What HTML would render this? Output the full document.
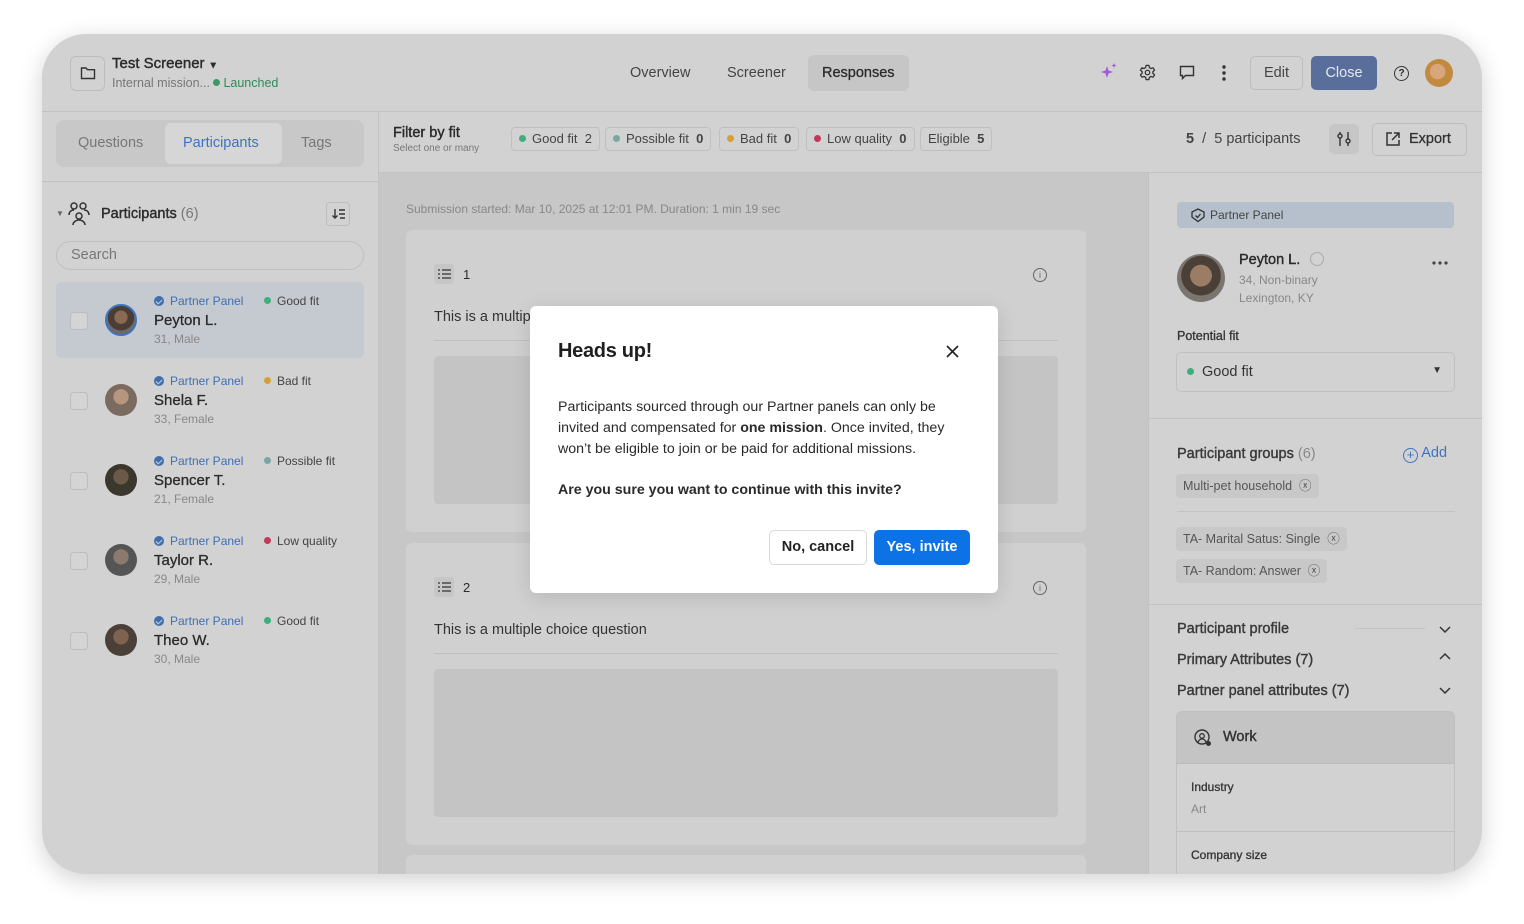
<!DOCTYPE html>
<html><head><meta charset="utf-8"><style>
*{box-sizing:border-box;margin:0;padding:0}
body{width:1524px;height:924px;background:#fff;font-family:"Liberation Sans",sans-serif;position:relative;overflow:hidden;color:#2a2a2a}
.win{position:absolute;left:42px;top:34px;width:1440px;height:840px;border-radius:44px;background:#d2d2d2;overflow:hidden;box-shadow:0 6px 24px rgba(0,0,0,.18)}
.a{position:absolute}
.t{position:absolute;white-space:nowrap}
.chip{position:absolute;top:93px;height:24px;border:1px solid #bfbfbf;border-radius:4px;font-size:13px;color:#444;padding:0 7px;line-height:22px;white-space:nowrap}
.dot{display:inline-block;width:7px;height:7px;border-radius:50%;margin-right:6px;vertical-align:1px}
.row{position:absolute;left:14px;width:308px;height:76px}
.cb{position:absolute;left:14px;top:30px;width:18px;height:18px;border:1px solid #bdbdbd;border-radius:4px;background:#d4d4d4}
.av{position:absolute;left:49px;top:22px;width:32px;height:32px;border-radius:50%;background:radial-gradient(circle at 50% 40%,#8a6a55 0 30%,#4a3d35 31% 60%,#6d6a66 61%)}
.pp{position:absolute;left:98px;top:12px;font-size:12px;color:#3f6fb0}
.bd{display:inline-block;width:10px;height:10px;border-radius:50%;background:#3f6fb0;margin-right:6px;vertical-align:-1px;position:relative}
.bd:after{content:"";position:absolute;left:3px;top:2px;width:3px;height:5px;border:solid #d2d2d2;border-width:0 1.3px 1.3px 0;transform:rotate(45deg)}
.fit{position:absolute;left:208px;top:12px;font-size:12px;color:#444}
.nm{position:absolute;left:98px;top:30px;font-size:15px;color:#2b2b2b;-webkit-text-stroke:.3px #2b2b2b}
.sub{position:absolute;left:98px;top:50px;font-size:12px;color:#888}
.tag{position:absolute;left:1134px;height:24px;background:#c8c8c8;border-radius:4px;font-size:12.5px;color:#555;padding:0 7px;line-height:24px;white-space:nowrap}
.card{position:absolute;left:364px;width:680px;background:#d0d0d0;border-radius:6px}
.ph{position:absolute;left:28px;width:624px;background:#c4c4c4;border-radius:4px}
.sec{position:absolute;left:1135px;font-size:14.5px;color:#3a3a3a;-webkit-text-stroke:.4px #3a3a3a}
</style></head><body>
<div class="win">
 <div class="a" style="left:28px;top:22px;width:35px;height:35px;border:1px solid #bdbdbd;border-radius:6px"></div>
 <svg class="a" style="left:38px;top:32px" width="16" height="14" viewBox="0 0 16 14"><path d="M1.5 2h4.5l1.5 1.7h7v8.8h-13z" fill="none" stroke="#333" stroke-width="1.4"/></svg>
 <div class="t" style="left:70px;top:21px;font-size:15px;color:#2b2b2b;-webkit-text-stroke:.4px #2b2b2b">Test Screener <span style="font-size:9px">▼</span></div>
 <div class="t" style="left:70px;top:42px;font-size:12.5px;color:#777">Internal mission... <span style="color:#2f8a58"><span class="dot" style="background:#3a9a66;margin-right:3px"></span>Launched</span></div>
 <div class="t" style="left:588px;top:31px;font-size:14.5px;color:#444">Overview</div>
 <div class="t" style="left:685px;top:31px;font-size:14.5px;color:#444">Screener</div>
 <div class="a" style="left:766px;top:21px;width:101px;height:36px;background:#c6c6c6;border-radius:6px"></div>
 <div class="t" style="left:780px;top:31px;font-size:14.5px;color:#2b2b2b;-webkit-text-stroke:.3px #2b2b2b">Responses</div>
 <svg class="a" style="left:1058px;top:28px" width="18" height="18"><path d="M7 4l1.5 4.5L13 10l-4.5 1.5L7 16l-1.5-4.5L1 10l4.5-1.5z M14 1l.7 1.8 1.8.7-1.8.7L14 6l-.7-1.8-1.8-.7 1.8-.7z" fill="#a55ad6"/></svg>
 <svg class="a" style="left:1097px;top:30px" width="17" height="17" viewBox="0 0 24 24"><path d="M10 2h4l.6 3 2.4 1.4 2.9-1 2 3.4-2.3 2v2.4l2.3 2-2 3.4-2.9-1-2.4 1.4-.6 3h-4l-.6-3-2.4-1.4-2.9 1-2-3.4 2.3-2v-2.4l-2.3-2 2-3.4 2.9 1L9.4 5z" fill="none" stroke="#333" stroke-width="1.8" stroke-linejoin="round"/><circle cx="12" cy="12" r="3.2" fill="none" stroke="#333" stroke-width="1.8"/></svg>
 <svg class="a" style="left:1137px;top:31px" width="16" height="15"><path d="M1.5 1.5h13v9h-8l-3 3v-3h-2z" fill="none" stroke="#333" stroke-width="1.4"/></svg>
 <svg class="a" style="left:1179px;top:30px" width="6" height="18"><circle cx="3" cy="3" r="1.7" fill="#333"/><circle cx="3" cy="9" r="1.7" fill="#333"/><circle cx="3" cy="15" r="1.7" fill="#333"/></svg>
 <div class="a" style="left:1208px;top:22px;width:53px;height:34px;border:1px solid #bdbdbd;border-radius:5px;font-size:14.5px;color:#444;text-align:center;line-height:32px">Edit</div>
 <div class="a" style="left:1269px;top:22px;width:66px;height:34px;background:#5a6e9c;border-radius:5px;font-size:14.5px;color:#e4e8f0;text-align:center;line-height:34px">Close</div>
 <div class="a" style="left:1352px;top:32px;width:15px;height:15px;border:1.4px solid #333;border-radius:50%;font-size:10px;text-align:center;line-height:13px;font-weight:700">?</div>
 <div class="a" style="left:1383px;top:25px;width:28px;height:28px;border-radius:50%;background:radial-gradient(circle at 45% 45%,#d9a67c 0 35%,#c28a3e 36%)"></div>
 <div class="a" style="left:0;top:77px;width:1440px;height:1px;background:#c2c2c2"></div>
 <div class="a" style="left:336px;top:78px;width:1px;height:762px;background:#c2c2c2"></div>
 <div class="a" style="left:14px;top:86px;width:308px;height:47px;background:#c8c8c8;border-radius:8px"></div>
 <div class="a" style="left:123px;top:89px;width:117px;height:41px;background:#d6d6d6;border-radius:6px"></div>
 <div class="t" style="left:36px;top:101px;font-size:14.5px;color:#777">Questions</div>
 <div class="t" style="left:141px;top:101px;font-size:14.5px;color:#3f73c0">Participants</div>
 <div class="t" style="left:259px;top:101px;font-size:14.5px;color:#777">Tags</div>
 <div class="a" style="left:0;top:147px;width:336px;height:1px;background:#c2c2c2"></div>
 <div class="t" style="left:14px;top:175px;font-size:8px;color:#666">▼</div>
 <svg class="a" style="left:26px;top:168px" width="22" height="24" viewBox="0 0 22 24"><g fill="none" stroke="#333" stroke-width="1.5"><circle cx="6" cy="4" r="3"/><circle cx="15" cy="4" r="3"/><circle cx="11" cy="14" r="3"/><path d="M1 13c0-3 2-5 5-5M21 13c0-3-2-5-5-5M5 23c0-3 3-5 6-5s6 2 6 5"/></g></svg>
 <div class="t" style="left:59px;top:172px;font-size:14.5px;color:#2b2b2b"><span style="-webkit-text-stroke:.4px #2b2b2b">Participants</span> <span style="color:#777">(6)</span></div>
 <div class="a" style="left:284px;top:168px;width:24px;height:24px;border:1px solid #bdbdbd;border-radius:4px"></div>
 <svg class="a" style="left:290px;top:174px" width="14" height="12"><path d="M3 1v9M0.5 7.5L3 10l2.5-2.5M7 2h6M7 6h6M8 10h5" fill="none" stroke="#333" stroke-width="1.4"/></svg>
 <div class="a" style="left:14px;top:207px;width:308px;height:29px;border:1px solid #c0c0c0;border-radius:15px;font-size:14.5px;color:#777;padding:5px 14px">Search</div>
 <div class="row" style="top:248px;background:#c5c9d0;border-radius:6px"><div class="cb"></div><div class="av" style="border:2px solid #3f73c0"></div><div class="pp"><span class="bd"></span>Partner Panel</div><div class="fit"><span class="dot" style="background:#3fae7a"></span>Good fit</div><div class="nm">Peyton L.</div><div class="sub">31, Male</div></div>
 <div class="row" style="top:328px"><div class="cb"></div><div class="av" style="background:radial-gradient(circle at 50% 40%,#b79680 0 30%,#7b6a5e 31%)"></div><div class="pp"><span class="bd"></span>Partner Panel</div><div class="fit"><span class="dot" style="background:#d3a03a"></span>Bad fit</div><div class="nm">Shela F.</div><div class="sub">33, Female</div></div>
 <div class="row" style="top:408px"><div class="cb"></div><div class="av" style="background:radial-gradient(circle at 50% 40%,#6b5a47 0 30%,#3c372d 31%)"></div><div class="pp"><span class="bd"></span>Partner Panel</div><div class="fit"><span class="dot" style="background:#7aa6a5"></span>Possible fit</div><div class="nm">Spencer T.</div><div class="sub">21, Female</div></div>
 <div class="row" style="top:488px"><div class="cb"></div><div class="av" style="background:radial-gradient(circle at 50% 40%,#8c7a6e 0 30%,#555 31%)"></div><div class="pp"><span class="bd"></span>Partner Panel</div><div class="fit"><span class="dot" style="background:#c23a5a"></span>Low quality</div><div class="nm">Taylor R.</div><div class="sub">29, Male</div></div>
 <div class="row" style="top:568px"><div class="cb"></div><div class="av" style="background:radial-gradient(circle at 50% 40%,#7d6350 0 30%,#4a4038 31%)"></div><div class="pp"><span class="bd"></span>Partner Panel</div><div class="fit"><span class="dot" style="background:#3fae7a"></span>Good fit</div><div class="nm">Theo W.</div><div class="sub">30, Male</div></div>
 <div class="t" style="left:351px;top:91px;font-size:14.5px;color:#2b2b2b;-webkit-text-stroke:.4px #2b2b2b">Filter by fit</div>
 <div class="t" style="left:351px;top:109px;font-size:10px;color:#777">Select one or many</div>
 <div class="chip" style="left:469px"><span class="dot" style="background:#3fae7a"></span>Good fit &nbsp;2</div>
 <div class="chip" style="left:563px"><span class="dot" style="background:#7aa6a5"></span>Possible fit &nbsp;<b>0</b></div>
 <div class="chip" style="left:677px"><span class="dot" style="background:#d3a03a"></span>Bad fit &nbsp;<b>0</b></div>
 <div class="chip" style="left:764px"><span class="dot" style="background:#c23a5a"></span>Low quality &nbsp;<b>0</b></div>
 <div class="chip" style="left:878px">Eligible &nbsp;<b>5</b></div>
 <div class="t" style="left:1144px;top:97px;font-size:14.5px;color:#444"><b>5</b> &nbsp;/ &nbsp;5 participants</div>
 <div class="a" style="left:1287px;top:90px;width:30px;height:30px;background:#c6c6c6;border-radius:5px"></div>
 <svg class="a" style="left:1294px;top:97px" width="16" height="16"><path d="M4 1v14M12 1v14" stroke="#333" stroke-width="1.4"/><circle cx="4" cy="5" r="2" fill="#c6c6c6" stroke="#333" stroke-width="1.4"/><circle cx="12" cy="10" r="2" fill="#c6c6c6" stroke="#333" stroke-width="1.4"/></svg>
 <div class="a" style="left:1330px;top:89px;width:95px;height:33px;border:1px solid #bdbdbd;border-radius:5px;font-size:14.5px;color:#333;padding:7px 0 0 36px;-webkit-text-stroke:.3px #333">Export</div>
 <svg class="a" style="left:1343px;top:97px" width="16" height="16"><path d="M7 2H2v12h12V9M9 2h5v5M14 2L7 9" fill="none" stroke="#333" stroke-width="1.5"/></svg>
 <div class="a" style="left:337px;top:138px;width:1103px;height:1px;background:#c2c2c2"></div>
 <div class="a" style="left:337px;top:139px;width:770px;height:701px;background:#c7c7c7"></div>
 <div class="t" style="left:364px;top:168px;font-size:12px;color:#888">Submission started: Mar 10, 2025 at 12:01 PM. Duration: 1 min 19 sec</div>
 <div class="card" style="top:196px;height:302px">
  <div class="a" style="left:28px;top:34px;width:20px;height:20px;background:#c6c6c6;border-radius:3px"></div>
  <svg class="a" style="left:32px;top:39px" width="13" height="10"><path d="M0 1h2M4 1h9M0 5h2M4 5h9M0 9h2M4 9h9" stroke="#333" stroke-width="1.3"/></svg>
  <div class="t" style="left:57px;top:37px;font-size:13px">1</div>
  <div class="a" style="left:627px;top:38px;width:14px;height:14px;border:1.3px solid #666;border-radius:50%;font-size:9px;text-align:center;line-height:12px;color:#666">i</div>
  <div class="t" style="left:28px;top:79px;font-size:14.5px;color:#333">This is a multiple choice question</div>
  <div class="a" style="left:28px;top:110px;width:624px;height:1px;background:#c0c0c0"></div>
  <div class="ph" style="top:126px;height:148px"></div>
 </div>
 <div class="card" style="top:509px;height:302px">
  <div class="a" style="left:28px;top:34px;width:20px;height:20px;background:#c6c6c6;border-radius:3px"></div>
  <svg class="a" style="left:32px;top:39px" width="13" height="10"><path d="M0 1h2M4 1h9M0 5h2M4 5h9M0 9h2M4 9h9" stroke="#333" stroke-width="1.3"/></svg>
  <div class="t" style="left:57px;top:37px;font-size:13px">2</div>
  <div class="a" style="left:627px;top:38px;width:14px;height:14px;border:1.3px solid #666;border-radius:50%;font-size:9px;text-align:center;line-height:12px;color:#666">i</div>
  <div class="t" style="left:28px;top:79px;font-size:14.5px;color:#333">This is a multiple choice question</div>
  <div class="a" style="left:28px;top:110px;width:624px;height:1px;background:#c0c0c0"></div>
  <div class="ph" style="top:126px;height:148px"></div>
 </div>
 <div class="card" style="top:821px;height:40px"></div>
 <div class="a" style="left:1135px;top:168px;width:277px;height:26px;background:#b6c0cd;border-radius:4px;font-size:12px;color:#444;padding:6px 0 0 33px">Partner Panel</div>
 <svg class="a" style="left:1149px;top:174px" width="14" height="15"><path d="M7 1l6 3v5l-6 4.5L1 9V4z M4.5 7.5l2 2 3-3.5" fill="none" stroke="#333" stroke-width="1.3"/></svg>
 <div class="a" style="left:1135px;top:220px;width:48px;height:48px;border-radius:50%;background:radial-gradient(circle at 50% 45%,#9b7d66 0 30%,#4a4038 31% 55%,#7a756f 56%)"></div>
 <div class="t" style="left:1197px;top:218px;font-size:14.5px;color:#2b2b2b"><span style="-webkit-text-stroke:.4px #2b2b2b">Peyton L.</span> <span style="display:inline-block;width:14px;height:14px;border:1px solid #aaa;border-radius:50%;margin-left:6px;vertical-align:-2px"></span></div>
 <div class="t" style="left:1197px;top:239px;font-size:12px;color:#888">34, Non-binary</div>
 <div class="t" style="left:1197px;top:257px;font-size:12px;color:#888">Lexington, KY</div>
 <svg class="a" style="left:1390px;top:227px" width="16" height="4"><circle cx="2" cy="2" r="1.6" fill="#444"/><circle cx="8" cy="2" r="1.6" fill="#444"/><circle cx="14" cy="2" r="1.6" fill="#444"/></svg>
 <div class="t" style="left:1135px;top:295px;font-size:12.5px;color:#333;-webkit-text-stroke:.3px #333">Potential fit</div>
 <div class="a" style="left:1134px;top:318px;width:279px;height:40px;border:1px solid #c0c0c0;border-radius:5px;font-size:14.5px;color:#333;padding:11px 0 0 10px"><span class="dot" style="background:#3fae7a;margin-right:8px"></span>Good fit<span style="position:absolute;right:12px;top:12px;font-size:10px">▼</span></div>
 <div class="a" style="left:1107px;top:384px;width:333px;height:1px;background:#c2c2c2"></div>
 <div class="a" style="left:1106px;top:139px;width:1px;height:701px;background:#c2c2c2"></div>
 <div class="t" style="left:1135px;top:412px;font-size:14.5px;color:#3a3a3a"><span style="-webkit-text-stroke:.4px #3a3a3a">Participant groups</span> <span style="color:#888">(6)</span></div>
 <div class="t" style="left:1361px;top:411px;font-size:14.5px;color:#3f73c0"><span style="display:inline-block;width:15px;height:15px;border:1.4px solid #3f73c0;border-radius:50%;font-size:13px;line-height:12px;text-align:center;vertical-align:-2px">+</span> Add</div>
 <div class="tag" style="top:440px">Multi-pet household &nbsp;ⓧ</div>
 <div class="a" style="left:1135px;top:477px;width:278px;height:1px;background:#c4c4c4"></div>
 <div class="tag" style="top:493px">TA- Marital Satus: Single &nbsp;ⓧ</div>
 <div class="tag" style="top:525px">TA- Random: Answer &nbsp;ⓧ</div>
 <div class="a" style="left:1107px;top:570px;width:333px;height:1px;background:#c2c2c2"></div>
 <div class="sec" style="top:587px">Participant profile</div>
 <div class="a" style="left:1313px;top:594px;width:70px;height:1px;background:#c2c2c2"></div>
 <div class="sec" style="top:618px">Primary Attributes (7)</div>
 <div class="sec" style="top:649px">Partner panel attributes (7)</div>
 <svg class="a" style="left:1397px;top:590px" width="12" height="80"><path d="M1 3l5 5 5-5M1 35l5-5 5 5M1 64l5 5 5-5" fill="none" stroke="#333" stroke-width="1.5"/></svg>
 <div class="a" style="left:1134px;top:677px;width:279px;height:180px;border:1px solid #c0c0c0;border-radius:6px;overflow:hidden">
  <div class="a" style="left:0;top:0;width:279px;height:52px;background:#c4c4c4;border-bottom:1px solid #bcbcbc"></div>
  <svg class="a" style="left:17px;top:17px" width="18" height="18"><circle cx="8" cy="8" r="7" fill="none" stroke="#333" stroke-width="1.4"/><circle cx="8" cy="7" r="2.3" fill="none" stroke="#333" stroke-width="1.3"/><path d="M4 13c1-2 2.5-3 4-3s3 1 4 3" fill="none" stroke="#333" stroke-width="1.3"/><circle cx="14.5" cy="14.5" r="2.5" fill="#333"/></svg>
  <div class="t" style="left:46px;top:17px;font-size:14.5px;color:#333;-webkit-text-stroke:.4px #333">Work</div>
  <div class="t" style="left:14px;top:68px;font-size:12px;color:#333;-webkit-text-stroke:.3px #333">Industry</div>
  <div class="t" style="left:14px;top:90px;font-size:12px;color:#888">Art</div>
  <div class="a" style="left:0;top:119px;width:279px;height:1px;background:#c0c0c0"></div>
  <div class="t" style="left:14px;top:136px;font-size:12px;color:#333;-webkit-text-stroke:.3px #333">Company size</div>
 </div>
</div>
<div class="a" style="left:530px;top:306px;width:468px;height:287px;background:#fff;border-radius:6px;box-shadow:0 4px 20px rgba(0,0,0,.12)">
 <div class="t" style="left:28px;top:34px;font-size:20px;font-weight:700;color:#1f1f1f;letter-spacing:-.3px">Heads up!</div>
 <svg class="a" style="left:416px;top:39px" width="13" height="13"><path d="M1 1l11 11M12 1L1 12" stroke="#222" stroke-width="1.6"/></svg>
 <div class="a" style="left:28px;top:91px;width:420px;font-size:14.2px;line-height:21px;color:#2a2a2a">Participants sourced through our Partner panels can only be invited and compensated for <b>one mission</b>. Once invited, they won’t be eligible to join or be paid for additional missions.</div>
 <div class="t" style="left:28px;top:176px;font-size:14.2px;font-weight:700;color:#2a2a2a">Are you sure you want to continue with this invite?</div>
 <div class="a" style="left:239px;top:224px;width:98px;height:35px;border:1px solid #d8d8d8;border-radius:5px;font-size:14.5px;font-weight:600;color:#222;text-align:center;line-height:33px">No, cancel</div>
 <div class="a" style="left:344px;top:224px;width:96px;height:35px;background:#0c72e5;border-radius:5px;font-size:14.5px;font-weight:600;color:#fff;text-align:center;line-height:35px">Yes, invite</div>
</div>
</body></html>
